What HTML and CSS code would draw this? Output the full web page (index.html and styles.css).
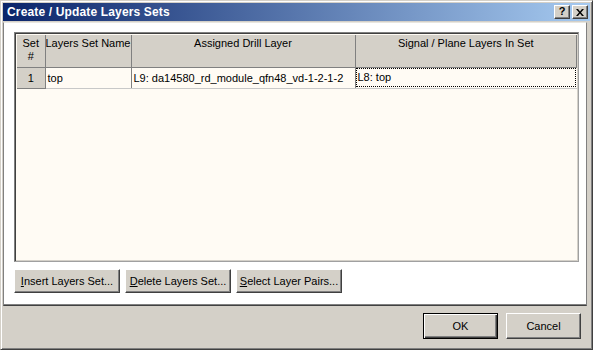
FILE: index.html
```html
<!DOCTYPE html>
<html>
<head>
<meta charset="utf-8">
<link rel="stylesheet" href="styles.css">
</head>
<body>
<div class="window">
  <div class="titlebar">
    <span class="title">Create / Update Layers Sets</span>
    <div class="tbtns">
      <span class="tbtn help">?</span>
      <span class="tbtn close"><svg width="8" height="7" viewBox="0 0 8 7"><path d="M0 0h2l2 2.5L6 0h2L5 3.5 8 7H6L4 4.5 2 7H0l3-3.5z" fill="#000"/></svg></span>
    </div>
  </div>
  <div class="panel">
    <div class="grid">
      <table class="sets">
        <colgroup><col class="c1"><col class="c2"><col class="c3"><col class="c4"></colgroup>
        <thead>
          <tr>
            <th>Set<br>#</th>
            <th>Layers Set Name</th>
            <th>Assigned Drill Layer</th>
            <th>Signal / Plane Layers In Set</th>
          </tr>
        </thead>
        <tbody>
          <tr>
            <td class="num">1</td>
            <td>top</td>
            <td>L9: da14580_rd_module_qfn48_vd-1-2-1-2</td>
            <td class="focus"><span>L8: top</span></td>
          </tr>
        </tbody>
      </table>
    </div>
    <div class="actions">
      <button class="btn wide"><u>I</u>nsert Layers Set...</button>
      <button class="btn wide"><u>D</u>elete Layers Set...</button>
      <button class="btn wide"><u>S</u>elect Layer Pairs...</button>
    </div>
  </div>
  <div class="footer">
    <button class="btn dlg default">OK</button>
    <button class="btn dlg">Cancel</button>
  </div>
</div>
</body>
</html>
```
FILE: styles.css
```css
html, body {
  margin: 0;
  padding: 0;
  background: #d4d0c8;
}
body {
  font-family: "Liberation Sans", Arial, sans-serif;
  font-size: 11px;
  color: #000;
}
.window {
  width: 593px;
  height: 350px;
  box-sizing: border-box;
  background: #d4d0c8;
  border: 1px solid;
  border-color: #d4d0c8 #404040 #404040 #d4d0c8;
  box-shadow: inset 1px 1px #fff, inset -1px -1px #808080;
  padding: 2px;
  display: flex;
  flex-direction: column;
}
.titlebar {
  height: 18px;
  flex: none;
  background: linear-gradient(to right, #0a246a, #a6caf0);
  display: flex;
  align-items: center;
  justify-content: space-between;
  padding: 0 2px 0 4px;
}
.title {
  color: #fff;
  font-weight: bold;
  font-size: 12px;
  letter-spacing: 0.15px;
}
.tbtns {
  display: flex;
  gap: 2px;
}
.tbtn {
  width: 16px;
  height: 14px;
  box-sizing: border-box;
  background: #d4d0c8;
  border: 1px solid;
  border-color: #fff #404040 #404040 #fff;
  box-shadow: inset -1px -1px #808080;
  display: flex;
  align-items: center;
  justify-content: center;
  font-weight: bold;
  font-size: 11px;
  line-height: 1;
}
.help { padding-bottom: 1px; }
.panel {
  flex: none;
  height: 284px;
  box-sizing: border-box;
  margin: 1px 3px 0 0;
  background: #fff;
  border-left: 1px solid #808080;
  border-top: 1px solid #e8e6e0;
  border-right: 1px solid #808080;
  border-bottom: 1px solid #404040;
  box-shadow: inset 0 -1px #808080;
  padding: 9px 7px 0 10px;
  display: flex;
  flex-direction: column;
}
.grid {
  height: 230px;
  box-sizing: border-box;
  border: 1px solid;
  border-color: #808080 #a0a0a0 #a0a0a0 #808080;
  box-shadow: inset 1px 1px #404040, inset -1px -1px #d4d0c8;
  padding: 2px 1px 1px 2px;
  background: #fffbf4;
}
.sets {
  width: 100%;
  border-collapse: collapse;
  table-layout: fixed;
}
.c1 { width: 28px; }
.c2 { width: 86px; }
.c3 { width: 224px; }
.sets th {
  background: #d4d0c8;
  font-weight: normal;
  height: 32px;
  box-sizing: border-box;
  vertical-align: top;
  text-align: center;
  padding: 2px 0 0;
  line-height: 13px;
  border-right: 1px solid #808080;
  border-bottom: 1px solid #808080;
  white-space: nowrap;
  overflow: hidden;
}
.sets td {
  height: 21px;
  box-sizing: border-box;
  padding: 0 2px;
  border-right: 1px solid #808080;
  border-bottom: 1px solid #c8c8c8;
  white-space: nowrap;
  overflow: hidden;
  vertical-align: middle;
}
.sets td.num {
  background: #d4d0c8;
  text-align: center;
  border-bottom: 1px solid #808080;
}
.sets td.focus {
  padding: 0;
  border-right: none;
}
.sets td.focus span {
  display: block;
  height: 19px;
  line-height: 17px;
  box-sizing: border-box;
  border: 1px dotted #000;
  padding-left: 1px;
  margin-right: 1px;
}
.actions {
  display: flex;
  gap: 5px;
  margin-top: 7px;
}
.btn {
  font-family: "Liberation Sans", Arial, sans-serif;
  font-size: 11px;
  color: #000;
  background: #d4d0c8;
  border: 1px solid;
  border-color: #fff #404040 #404040 #fff;
  box-shadow: inset -1px -1px #808080;
  padding: 0;
  margin: 0;
  box-sizing: border-box;
}
.btn.wide {
  width: 106px;
  height: 24px;
}
.footer {
  flex: 1;
  display: flex;
  justify-content: flex-end;
  align-items: flex-start;
  gap: 8px;
  padding: 7px 9px 0 0;
}
.btn.dlg {
  width: 75px;
  height: 26px;
}
.btn.default {
  border: 1px solid #000;
  box-shadow: inset 1px 1px #fff, inset -1px -1px #404040, inset -2px -2px #808080;
}
```
